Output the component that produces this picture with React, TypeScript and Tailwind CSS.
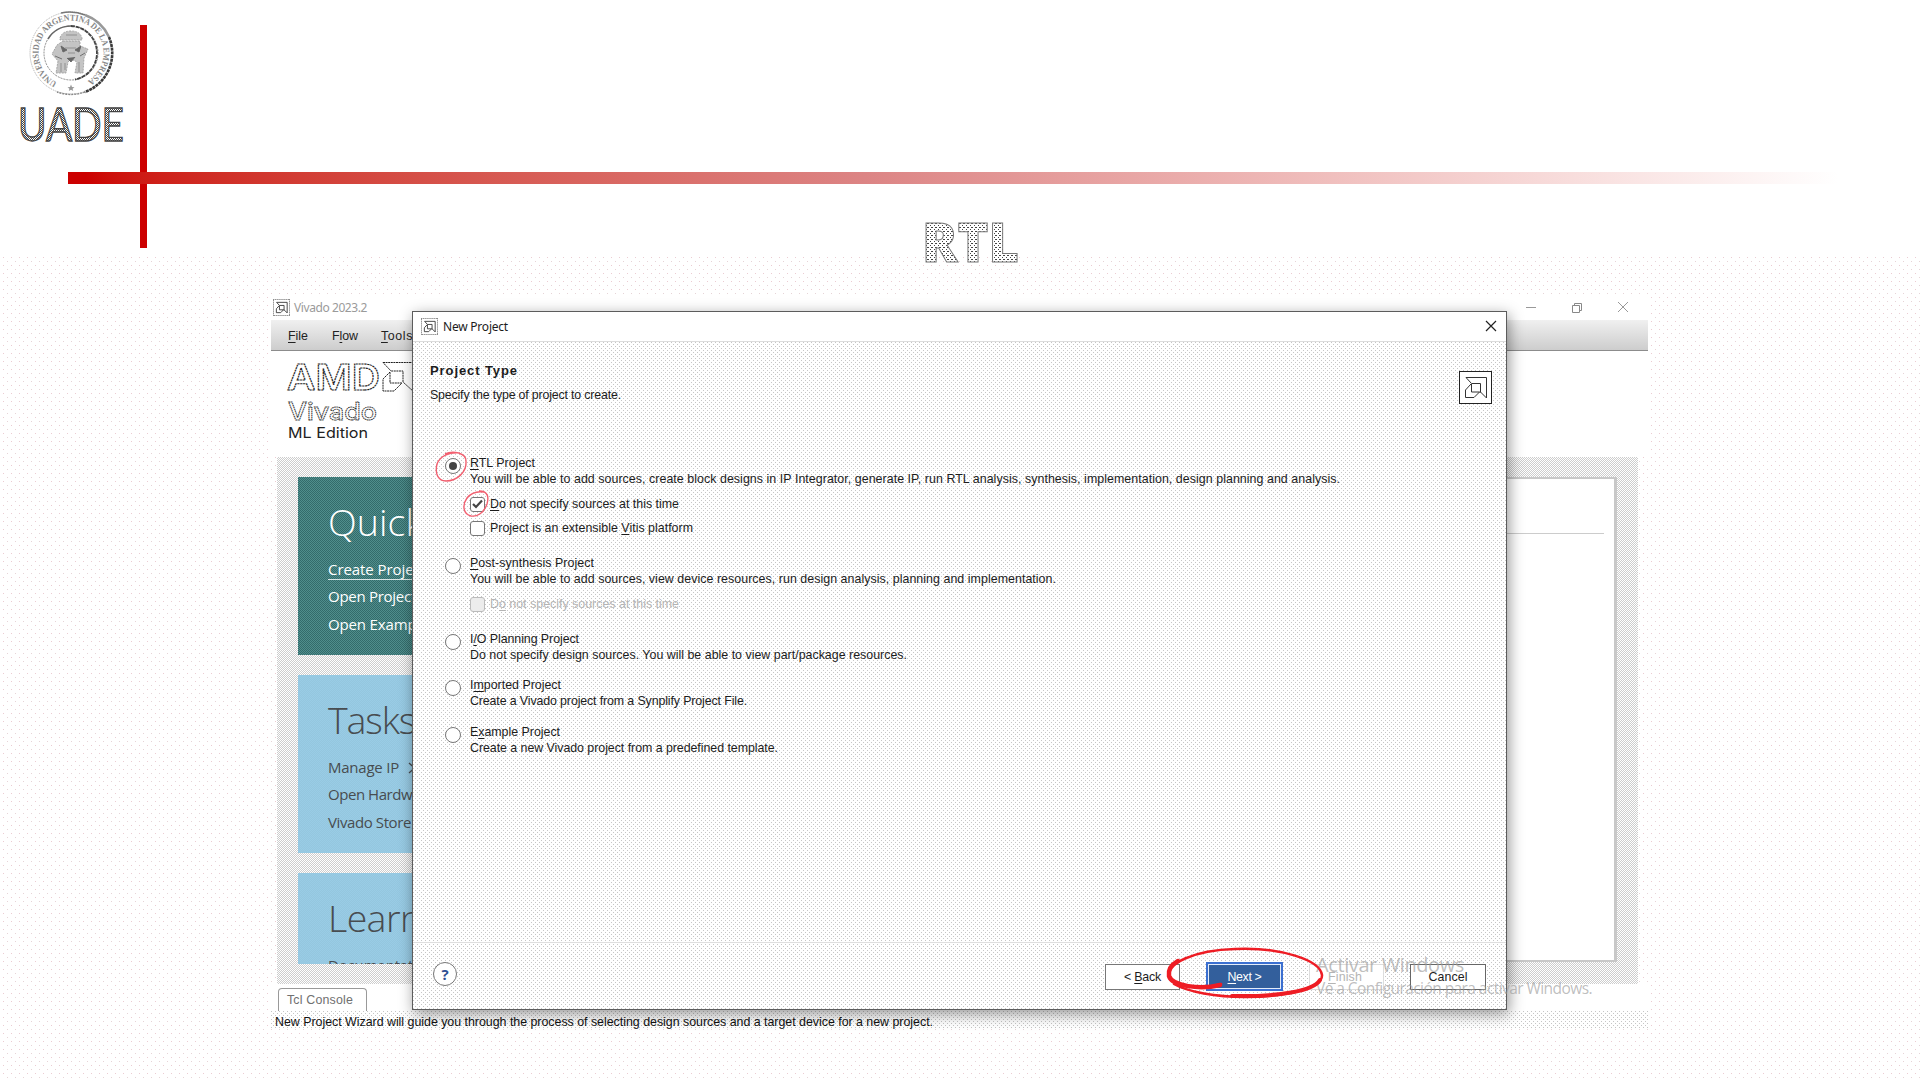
import { useLayoutEffect, useRef, useState, type ReactNode } from "react";

/** Single line of text tracked so that it fills exactly `w` pixels. */
function Fit({ w, className = "", children }: { w: number; className?: string; children: ReactNode }) {
  const ref = useRef<HTMLSpanElement>(null);
  const [tracking, setTracking] = useState(0);
  useLayoutEffect(() => {
    const el = ref.current;
    if (!el) return;
    const chars = (el.textContent ?? "").length;
    setTracking((w - el.getBoundingClientRect().width) / chars);
  }, [w]);
  return (
    <span ref={ref} className={`inline-block whitespace-pre ${className}`} style={{ letterSpacing: `${tracking}px` }}>
      {children}
    </span>
  );
}

/** Underlined mnemonic letter inside a label: "_" precedes the letter. */
function Mnemonic({ text }: { text: string }) {
  const i = text.indexOf("_");
  if (i < 0) return <>{text}</>;
  return (
    <>
      {text.slice(0, i)}
      <span className="underline underline-offset-2">{text[i + 1]}</span>
      {text.slice(i + 2)}
    </>
  );
}

const CHECKER = "bg-[repeating-conic-gradient(#cdcdcd_0%_25%,#ffffff_0%_50%)] bg-[length:2px_2px]";
const DOTS =
  "bg-white bg-[conic-gradient(at_1px_1px,transparent_75%,#c6c6c6_0),conic-gradient(at_1px_1px,transparent_75%,#c6c6c6_0)] bg-[length:4px_4px] bg-[position:0_0,2px_2px]";
const PAGE_DOTS =
  "bg-[conic-gradient(at_1px_1px,transparent_75%,#ebccd2_0),conic-gradient(at_1px_1px,transparent_75%,#e6d4d7_0)] bg-[length:8px_8px] bg-[position:3px_0,7px_4px]";

function AmdMark({ size, dash = false }: { size: number; dash?: boolean }) {
  return (
    <svg width={size} height={size} viewBox="0 0 33 33" className="shrink-0">
      <rect x="0.5" y="0.5" width="32" height="32" fill="#fff" stroke="#222" strokeDasharray={dash ? "2 2" : undefined} strokeWidth={dash ? 1.8 : 1} />
      <path
        d="M7 6.500H27.500V27L21.500 21V12.500H12.500Z M12 13L6.500 19V26.500H15L20.500 21H12.500V13M20.500 21H22"
        fill="none"
        stroke="#333"
        strokeWidth={dash ? 1.7 : 1}
      />
    </svg>
  );
}

function Seal() {
  return (
    <svg width="92" height="92" viewBox="-46 -46 92 92" className="block">
      <defs>
        <path id="ring" d="M-14 29.300A32.500 32.500 0 1 1 14 29.300" />
      </defs>
      <circle r="41" fill="none" stroke="#aaa" strokeWidth="1" strokeDasharray="1 1" />
      <path d="M-10 -40A41.500 41.500 0 0 1 14 -38" fill="none" stroke="#777" strokeWidth="1.600" />
      <path d="M14 -38A41.500 41.500 0 0 1 38 -16" fill="none" stroke="#999" strokeWidth="2.400" />
      <path d="M38 -16A41.500 41.500 0 0 1 14 39" fill="none" stroke="#3a3a3a" strokeWidth="2.600" strokeDasharray="3 0.700" />
      <path d="M14 39A41.500 41.500 0 0 1 -14 39" fill="none" stroke="#888" strokeWidth="1.400" strokeDasharray="2 1" />
      <circle r="27" fill="none" stroke="#888" strokeWidth="1" strokeDasharray="2 1" />
      <path d="M0 -27A27 27 0 0 1 4 26.500" fill="none" stroke="#444" strokeWidth="1.800" strokeDasharray="4 0.800" />
      <path d="M-23 -14A27 27 0 0 1 0 -27" fill="none" stroke="#666" strokeWidth="1.500" />
      <text fontFamily="Liberation Serif, serif" fontSize="8.800" fontWeight="700" fill="#868686">
        <textPath href="#ring" textLength="172" lengthAdjust="spacingAndGlyphs">
          UNIVERSIDAD ARGENTINA DE LA EMPRESA
        </textPath>
      </text>
      <path d="M0 31.500L1 34L3.500 34.200L1.600 35.800L2.200 38L0 36.800L-2.200 38L-1.600 35.800L-3.500 34.200L-1 34Z" fill="#999" />
      <g fill="#c4c4c4" stroke="#999" strokeWidth="0.800" strokeDasharray="2 1">
        <path d="M-11 -15Q-9 -22 0 -22Q9 -22 11 -15V-13H-11Z" />
        <path d="M-8 -12H9V-7L17 -4L13 5L12 20H4L6 9L0 6L-3 9L-5 20H-15L-13 8L-19 1L-14 -8Z" />
      </g>
      <path d="M-10 -7L-4 -3L-8 -1ZM10 -7L4 -3L8 -1ZM-4 5L0 9L4 4M-16 3L-9 6M9 3L14 0" fill="#666" stroke="#666" strokeWidth="0.900" />
      <path d="M-10 10V19M-6 10V17M8 9V19M-5 -18H6M-6 -5H5M-3 0H4" fill="none" stroke="#909090" strokeWidth="1" />
    </svg>
  );
}

function Radio({ on = false }: { on?: boolean }) {
  return (
    <span className="mt-[3px] flex size-4 shrink-0 items-center justify-center rounded-full border border-[#777] bg-white">
      {on && <span className="size-2 rounded-full bg-[#444]" />}
    </span>
  );
}

function Check({ label, w, on = false, disabled = false }: { label: string; w: number; on?: boolean; disabled?: boolean }) {
  return (
    <div className={`flex h-[24px] items-center gap-[5px] ${disabled ? "text-[#b4b4b4]" : ""}`}>
      <span
        className={`flex size-[15px] items-center justify-center rounded-[3px] border ${disabled ? "border-[#bbb] bg-[#ececec]" : "border-[#777] bg-white"}`}
      >
        {on && (
          <svg width="11" height="10" viewBox="0 0 11 10">
            <path d="M1 5L4 8L10 1.500" fill="none" stroke="#444" strokeWidth="2.200" />
          </svg>
        )}
      </span>
      <Fit w={w}>
        <Mnemonic text={label} />
      </Fit>
    </div>
  );
}

function Option(props: { title: string; tw: number; text: string; dw: number; h: string; on?: boolean; children?: ReactNode }) {
  return (
    <div className={`flex gap-[9px] ${props.h}`}>
      <Radio on={props.on} />
      <div className="flex flex-col">
        <div className="h-4">
          <Fit w={props.tw}>
            <Mnemonic text={props.title} />
          </Fit>
        </div>
        <div className="h-4">
          <Fit w={props.dw}>{props.text}</Fit>
        </div>
        <div className="pt-[5px]">{props.children}</div>
      </div>
    </div>
  );
}

type Item = { name: string; w: number; link?: boolean; more?: boolean };

function Card({ title, tw, items, tone }: { title: string; tw: number; items: Item[]; tone: "teal" | "blue" }) {
  return (
    <section
      className={`flex h-[178px] w-[300px] shrink-0 flex-col overflow-hidden bg-[length:2px_2px] pl-[30px] font-['Open_Sans',sans-serif] ${
        tone === "teal"
          ? "bg-[repeating-conic-gradient(#336b6b_0%_25%,#508e8c_0%_50%)] text-white"
          : "bg-[repeating-conic-gradient(#99cce6_0%_25%,#94c6de_0%_50%)] text-[#484c50]"
      }`}
    >
      <h2 className="mt-[19px] h-[60px] shrink-0 text-[37.5px] leading-[52px] font-light">
        <Fit w={tw}>{title}</Fit>
      </h2>
      <ul className="text-[15px] leading-[27.4px]">
        {items.map((item) => (
          <li key={item.name} className="flex h-[27.4px] items-start">
            <Fit w={item.w} className={item.link ? "h-[24px] border-b border-white/80" : ""}>
              {item.name}
            </Fit>
            {item.more && (
              <svg width="8" height="12" className="mt-[8px] ml-[9px]">
                <path d="M1 1L6.500 6L1 11" fill="none" stroke="#484c50" strokeWidth="1.300" />
              </svg>
            )}
          </li>
        ))}
      </ul>
    </section>
  );
}

function VivadoWindow() {
  return (
    <div className="flex h-[733px] w-[1377px] flex-col font-['Liberation_Sans',sans-serif] text-[12.4px] text-[#222]">
      <div className="flex h-[25px] shrink-0 items-center bg-white pr-[19px] pl-[2px] text-[#9a9a9a]">
        <AmdMark size={17} dash />
        <Fit w={73} className="mt-px ml-[4px] font-['Noto_Sans',sans-serif] text-[12px]">
          Vivado 2023.2
        </Fit>
        <div className="ml-auto flex items-center gap-[34px]">
          <svg width="12" height="12" className="block">
            <path d="M1 5.500H11" stroke="#999" />
          </svg>
          <svg width="12" height="12" fill="none" stroke="#888">
            <path d="M1.500 3.500H8.500V10.500H1.500ZM3.500 3.500V1.500H10.500V8.500H8.500" />
          </svg>
          <svg width="12" height="12" className="-mt-px block">
            <path d="M1 1L11 11M11 1L1 11" stroke="#999" />
          </svg>
        </div>
      </div>
      <nav className="flex h-[31px] shrink-0 items-center border-b border-[#8c8c8c] bg-linear-to-b from-[#f0f0f0] to-[#cdcdcd] pt-[2px] pl-[17px]">
        <Fit w={20}>
          <Mnemonic text="_File" />
        </Fit>
        <Fit w={26} className="ml-[24px]">
          <Mnemonic text="F_low" />
        </Fit>
        <Fit w={32} className="ml-[23px]">
          <Mnemonic text="_Tools" />
        </Fit>
      </nav>
      <div className="h-[106px] shrink-0 bg-white pt-[8px] pl-[15px]">
        <svg width="160" height="92" className="block">
          <g fontFamily="Inter, sans-serif" fill="#fff" stroke="#222">
            <text x="1" y="30.500" fontSize="36" fontWeight="600" textLength="93" lengthAdjust="spacingAndGlyphs" strokeWidth="1.100" strokeDasharray="2 0.600">
              AMD
            </text>
            <path d="M97 3.500H128V33L117 23V12H105ZM104 13L97 20V32H108L116 24H104Z" strokeDasharray="2 0.600" />
            <text x="2" y="61" fontSize="24" fontWeight="500" textLength="89" lengthAdjust="spacingAndGlyphs" stroke="#333" strokeWidth="0.900" strokeDasharray="1.500 0.500">
              Vivado
            </text>
          </g>
          <text x="2" y="78.500" fontFamily="Inter, sans-serif" fontSize="14.500" fontWeight="400" fill="#222" textLength="80" lengthAdjust="spacingAndGlyphs">
            ML Edition
          </text>
        </svg>
      </div>
      <div className={`ml-[6px] flex h-[527px] w-[1361px] shrink-0 justify-between pt-[20px] pr-[21px] pl-[21px] ${CHECKER}`}>
        <div className="flex h-[487px] flex-col gap-[20px] overflow-hidden">
          <Card
            title="Quick Start"
            tw={186}
            tone="teal"
            items={[
              { name: "Create Project", w: 98, link: true },
              { name: "Open Project", w: 88 },
              { name: "Open Example Project", w: 152 },
            ]}
          />
          <Card
            title="Tasks"
            tw={87}
            tone="blue"
            items={[
              { name: "Manage IP", w: 71, more: true },
              { name: "Open Hardware Manager", w: 168 },
              { name: "Vivado Store", w: 83 },
            ]}
          />
          <Card title="Learning Center" tw={261} tone="blue" items={[{ name: "Documentation and Tutorials", w: 200 }]} />
        </div>
        <div className="h-[485px] w-[500px] border-t-2 border-r-3 border-b-2 border-[#c8c8c8] bg-white">
          <div className="mr-[10px] h-[55px] border-b border-[#ccc]" />
        </div>
      </div>
      <div className="h-[27px] shrink-0 bg-white pt-[4px] pl-[7px]">
        <div className="flex h-[23px] w-[89px] items-center rounded-t border border-b-0 border-[#999] pl-[8px] text-[#707070]">
          <Fit w={66}>Tcl Console</Fit>
        </div>
      </div>
      <footer className={`flex h-[18px] shrink-0 items-center pt-[5px] pl-[4px] text-[#111] ${DOTS}`}>
        <Fit w={658}>New Project Wizard will guide you through the process of selecting design sources and a target device for a new project.</Fit>
      </footer>
    </div>
  );
}

function NewProjectDialog() {
  return (
    <div
      className={`absolute top-[311px] left-[412px] flex h-[699px] w-[1095px] flex-col border border-[#5c5c5c] font-['Liberation_Sans',sans-serif] text-[12.4px] leading-4 text-[#1c1c1c] shadow-[2px_4px_14px_rgba(0,0,0,0.42)] ${DOTS}`}
    >
      <div className="flex h-[30px] shrink-0 items-center border-b border-[#dcdcdc] bg-white pr-[9px] pl-[8px]">
        <AmdMark size={17} dash />
        <Fit w={65} className="ml-[5px] font-['Noto_Sans',sans-serif] text-[12px]">
          New Project
        </Fit>
        <svg width="12" height="12" className="-mt-px ml-auto">
          <path d="M1 1L11 11M11 1L1 11" stroke="#222" strokeWidth="1.200" />
        </svg>
      </div>
      <div className="flex h-[113px] shrink-0 justify-between pr-[14px] pl-[17px]">
        <div className="flex flex-col items-start pt-[21px]">
          <Fit w={88} className="h-[24px] text-[13px] font-bold">
            Project Type
          </Fit>
          <Fit w={191}>Specify the type of project to create.</Fit>
        </div>
        <div className="pt-[29px]">
          <AmdMark size={33} />
        </div>
      </div>
      <div className="flex flex-1 flex-col pl-[32px]">
        <Option title="_RTL Project" tw={65} h="h-[100px]" on dw={870} text="You will be able to add sources, create block designs in IP Integrator, generate IP, run RTL analysis, synthesis, implementation, design planning and analysis.">
          <Check label="_Do not specify sources at this time" w={189} on />
          <Check label="Project is an extensible _Vitis platform" w={203} />
        </Option>
        <Option title="_Post-synthesis Project" tw={124} h="h-[76px]" dw={586} text="You will be able to add sources, view device resources, run design analysis, planning and implementation.">
          <Check label="D_o not specify sources at this time" w={189} disabled />
        </Option>
        <Option title="I_/O Planning Project" tw={109} h="h-[46px]" dw={437} text="Do not specify design sources. You will be able to view part/package resources." />
        <Option title="I_mported Project" tw={91} h="h-[47px]" dw={277} text="Create a Vivado project from a Synplify Project File." />
        <Option title="E_xample Project" tw={90} h="h-[46px]" dw={308} text="Create a new Vivado project from a predefined template." />
      </div>
      <div className="flex h-[67px] shrink-0 items-start border-t border-[#dedede] pt-[19px] pr-[20px] pl-[20px]">
        <button className="flex size-6 items-center justify-center rounded-full border border-[#777] bg-white font-['Open_Sans',sans-serif] text-[15px] font-bold text-[#2f4f93]">
          ?
        </button>
        <div className="ml-auto flex items-center text-[12.4px]">
          <button className="h-[26px] w-[75px] border border-[#777] bg-white">
            <Fit w={37}>
              <Mnemonic text="< _Back" />
            </Fit>
          </button>
          <button className="ml-[26px] h-[29px] w-[77px] border-2 border-[#3b6fd0] bg-[#335f9c] text-white inset-ring inset-ring-[#e4ecf8]">
            <Fit w={34}>
              <Mnemonic text="_Next >" />
            </Fit>
          </button>
          <button className="ml-[26px] h-[26px] w-[75px] border border-[#ddd] bg-white pr-[3px] text-[#b4b4b4]">
            <Fit w={34}>
              <Mnemonic text="_Finish" />
            </Fit>
          </button>
          <button className="ml-[26px] h-[26px] w-[76px] border border-[#666] bg-white">
            <Fit w={39}>Cancel</Fit>
          </button>
        </div>
      </div>
    </div>
  );
}

export default function App() {
  return (
    <main className="relative flex h-[1080px] w-[1920px] flex-col overflow-hidden bg-white">
      <header className="h-[257px] shrink-0 pt-[7px] pl-[16px]">
        <div className="flex w-[110px] flex-col items-center">
          <Seal />
          <svg width="110" height="50" className="block">
            <defs>
              <pattern id="weave" width="2" height="2" patternUnits="userSpaceOnUse">
                <rect width="2" height="2" fill="#fff" />
                <rect width="1" height="1" fill="#444" />
                <rect x="1" y="1" width="1" height="1" fill="#444" />
              </pattern>
            </defs>
            <text x="2" y="41.500" fontFamily="Lato, sans-serif" fontSize="46" fontWeight="400" fill="url(#weave)" stroke="#444" strokeWidth="1.300" textLength="106" lengthAdjust="spacingAndGlyphs">
              UADE
            </text>
          </svg>
        </div>
        <div className="absolute top-[25px] left-[140px] h-[223px] w-[7px] bg-[#cc0000]" />
        <div className="absolute top-[172px] left-[68px] h-[12px] w-[1770px] bg-linear-to-r from-[#cc0000] from-[1%] via-[#dc8484] via-[45%] to-white" />
        <svg width="110" height="80" className="absolute top-[203px] left-[920px]">
          <defs>
            <pattern id="speckle" width="4" height="4" patternUnits="userSpaceOnUse">
              <rect width="4" height="4" fill="#fff" />
              <path d="M0 0h1v1H0ZM2 2h1v1H2ZM3 0h1v1H3Z" fill="#444" />
            </pattern>
          </defs>
          <text x="2" y="59" fontFamily="Open Sans, sans-serif" fontSize="54" fontWeight="800" fill="url(#speckle)" stroke="#777" strokeWidth="1" textLength="97" lengthAdjust="spacingAndGlyphs">
            RTL
          </text>
        </svg>
      </header>
      <div className={`flex flex-1 items-start pt-[38px] pl-[271px] ${PAGE_DOTS}`}>
        <VivadoWindow />
      </div>
      <NewProjectDialog />

      <div className="absolute top-[950px] left-[1316px] flex flex-col items-start font-['Open_Sans',sans-serif] text-[#9a9a9a]/65">
        <Fit w={148} className="h-[28px] text-[20px] leading-[29px]">
          Activar Windows
        </Fit>
        <Fit w={276} className="text-[15.5px] leading-[20px]">
          Ve a Configuración para activar Windows.
        </Fit>
      </div>

      <svg width="60" height="80" className="absolute top-[445px] left-[433px]" fill="none" stroke="#f26070" strokeWidth="1.400">
        <path d="M12 9C20 5 33 8 33 16C34 27 24 36 13 36C4 36 2 27 4 19C7 11 16 7 27 8" />
        <path d="M46 46C55 46 56 52 54 59C51 68 44 72 38 71C30 69 29 60 34 53C38 48 44 46 51 47" />
      </svg>
      <svg width="170" height="60" className="absolute top-[943px] left-[1160px]" fill="none" stroke="#ee1c24" strokeLinecap="round">
        <path d="M61 41C45 47 12 44 9 34C5 21 34 7 75 6C121 4 160 17 162 32C163 45 127 54 85 54C56 54 28 49 14 41" strokeWidth="2.500" />
        <path d="M60 42C40 47 12 43 9 33C8 27 11 22 18 18" strokeWidth="4.500" />
        <path d="M160 37C154 48 118 54 72 53" strokeWidth="4" />
      </svg>
    </main>
  );
}
